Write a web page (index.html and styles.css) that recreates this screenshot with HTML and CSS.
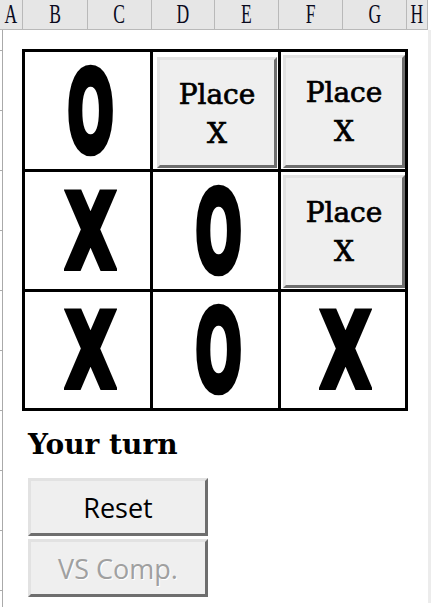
FILE: index.html
```html
<!DOCTYPE html>
<html lang="en">
<head>
  <meta charset="UTF-8" />
  <meta name="viewport" content="width=device-width, initial-scale=1" />
  <title>Tic-tac-toe</title>
  <link rel="stylesheet" href="styles.css">
</head>
<body>
  <div class="cols">
    <div class="col col-a"><span>A</span></div>
    <div class="col col-b"><span>B</span></div>
    <div class="col col-c"><span>C</span></div>
    <div class="col col-d"><span>D</span></div>
    <div class="col col-e"><span>E</span></div>
    <div class="col col-f"><span>F</span></div>
    <div class="col col-g"><span>G</span></div>
    <div class="col col-h"><span>H</span></div>
  </div>
  <div class="sheet">
    <div class="rows"></div>
    <main class="game">
      <div class="board">
        <div class="cell"><span class="mark o">O</span></div>
        <div class="cell cell-btn"><button class="place first">Place<br>X</button></div>
        <div class="cell cell-btn"><button class="place">Place<br>X</button></div>

        <div class="cell"><span class="mark x">X</span></div>
        <div class="cell"><span class="mark o">O</span></div>
        <div class="cell cell-btn"><button class="place">Place<br>X</button></div>

        <div class="cell"><span class="mark x">X</span></div>
        <div class="cell"><span class="mark o">O</span></div>
        <div class="cell"><span class="mark x">X</span></div>
      </div>
      <h2 class="status">Your turn</h2>
      <div class="actions">
        <button class="btn">Reset</button>
        <button class="btn" disabled>VS Comp.</button>
      </div>
    </main>
    <div class="scroll"></div>
  </div>
</body>
</html>
```

FILE: styles.css
```css
body {
  margin: 0;
  background: #fff;
  height: 100vh;
  display: flex;
  flex-direction: column;
  overflow: hidden;
}
.cols {
  display: flex;
  width: 428px;
  height: 29px;
  background: #e6e6e6;
  border-bottom: 1px solid #b9b9b9;
}
.col {
  display: flex;
  justify-content: center;
  align-items: center;
  border-right: 1px solid #b9b9b9;
  font-family: "Liberation Serif", serif;
  font-size: 27px;
  color: #0a0a1e;
}
.col span { display: inline-block; transform: scaleX(0.65); }
.col-a { width: 22px; }
.col-b { width: 64px; }
.col-c { width: 63px; }
.col-d { width: 62px; }
.col-e { width: 63px; }
.col-f { width: 63px; }
.col-g { width: 63px; }
.col-h { width: 20px; }

.sheet {
  flex: 1;
  display: flex;
}
.rows {
  width: 2px;
  border-right: 1px solid #aaa;
  background: repeating-linear-gradient(to bottom, transparent 0 20px, #aaa 20px 21px, transparent 21px 60px);
}
.scroll {
  width: 3px;
  background: #ececec;
  margin-bottom: 4px;
}
.game {
  flex: 1;
  padding: 19px 0 0 19px;
}
.board {
  display: grid;
  grid-template-columns: 125px 125px 124px;
  grid-template-rows: 117px 117px 116px;
  gap: 3px;
  padding: 3px;
  width: fit-content;
  background: #000;
}
.cell {
  background: #fff;
  display: flex;
  align-items: center;
  justify-content: center;
  padding-left: 6px;
}
.cell-btn {
  padding: 3px 0 1px 2px;
  align-items: stretch;
  justify-content: stretch;
}
.mark {
  display: inline-block;
  font-family: "DejaVu Sans", sans-serif;
  font-weight: bold;
  font-size: 100px;
  line-height: 1;
  margin-top: 4px;
  color: #000;
  -webkit-text-stroke: 6px #000;
}
.o { transform: scale(0.55, 1.12); }
.x { transform: scale(0.65, 1.03); }

.place {
  flex: 1;
  margin: 0;
  padding: 0;
  background: #efefef;
  border: 3px solid;
  border-color: #e2e2e2 #6e6e6e #6e6e6e #e2e2e2;
  font-family: "DejaVu Serif", serif;
  font-size: 28px;
  line-height: 39px;
  color: #000;
  -webkit-text-stroke: 0.7px #000;
}
.place.first { margin: 2px 1px 0 2px; padding-top: 3px; }

.status {
  margin: 17px 0 0 6px;
  font-family: "DejaVu Serif", serif;
  font-weight: bold;
  font-size: 28px;
  line-height: normal;
  color: #000;
}
.actions {
  display: flex;
  flex-direction: column;
  gap: 3px;
  margin: 17px 0 0 6px;
}
.btn {
  width: 180px;
  height: 58px;
  padding: 0;
  background: #efefef;
  border: 3px solid;
  border-color: #e2e2e2 #6e6e6e #6e6e6e #e2e2e2;
  font-family: "Open Sans", sans-serif;
  font-size: 27px;
  color: #000;
}
.btn:disabled {
  color: #a0a0a0;
  text-shadow: 1px 1px 0 #fff;
}
```
